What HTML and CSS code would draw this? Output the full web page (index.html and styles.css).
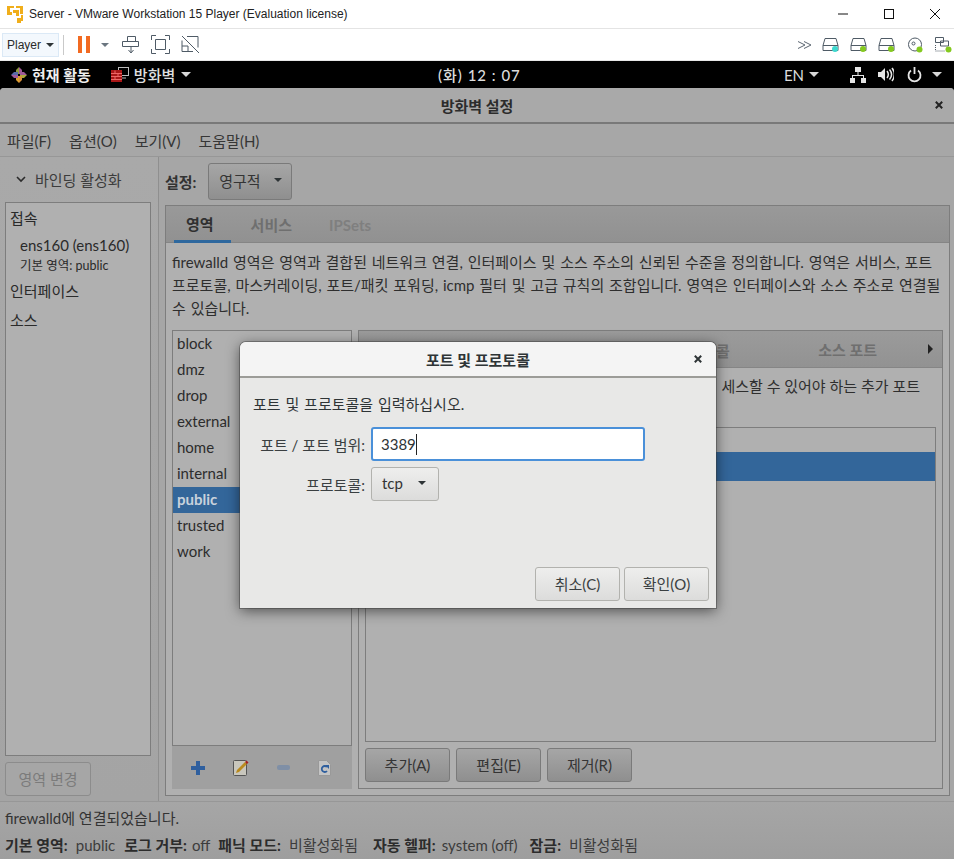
FILE: index.html
```html
<!doctype html>
<html lang="ko">
<head>
	<meta charset="utf-8">
	<title>Server - VMware Workstation 15 Player</title>
	<link rel="stylesheet" href="styles.css">
</head>
<body>
	<header class="titlebar">
		<svg class="vm-logo" width="17" height="17" viewBox="0 0 17 17" fill="#f0ae1b"><path d="M0 0h7v2H3v4h2v3H0zM9 0h7v2h-7zM13 2h3v6h-3zM6 4h6v6H9V7H6zM14 9h2v6h-2zM10 12h4v5h-4z"/></svg>
		<span class="title-text">Server - VMware Workstation 15 Player (Evaluation license)</span>
		<div class="win-btns">
			<svg width="12" height="12" viewBox="0 0 12 12"><path d="M1 6h10" stroke="#111" stroke-width="1"/></svg>
			<svg width="12" height="12" viewBox="0 0 12 12"><rect x="1.500" y="1.500" width="9" height="9" fill="none" stroke="#111"/></svg>
			<svg width="12" height="12" viewBox="0 0 12 12"><path d="M1 1l10 10M11 1L1 11" stroke="#111"/></svg>
		</div>
	</header>

	<div class="toolbar">
		<div class="player-btn">Player<i class="arrow dark"></i></div>
		<div class="tool-sep"></div>
		<div class="pause"><i></i><i></i></div>
		<i class="arrow gray"></i>
		<svg class="tool-icon" width="18" height="20" viewBox="0 0 18 20" fill="none" stroke="#4f5b66"><path d="M5.500 1.500h8v5h-8zM.5 6.500h16v5H.5zM9 12v5M6.500 15L9 18l2.500-3"/></svg>
		<svg class="tool-icon" width="19" height="19" viewBox="0 0 19 19" fill="none" stroke="#4f5b66"><path d="M.5 5V.5H5M14 .5h4.500V5M18.500 14v4.500H14M5 18.500H.5V14"/><path d="M4.500 4.500h10v10h-10z"/></svg>
		<svg class="tool-icon" width="19" height="19" viewBox="0 0 19 19" fill="none" stroke="#4f5b66"><path d="M6 1.500h11v11M12 16.500H1v-11M1 1l17 17M1 11h6v5"/></svg>
		<div class="tool-right">
			<svg class="chevrons" width="14" height="8" viewBox="0 0 14 8" fill="none" stroke="#5b6670"><path d="M0 .5l7 3.500-7 3.500M6 .5l7 3.500-7 3.500"/></svg>
			<svg width="17" height="16" viewBox="0 0 17 16" fill="none" stroke="#4f5b66"><path d="M3 1.500h11l2 7v5H1v-5zM1 8.500h15"/><circle cx="13" cy="12" r="3" fill="#3ed9cf" stroke="none"/></svg>
			<svg width="17" height="16" viewBox="0 0 17 16" fill="none" stroke="#4f5b66"><path d="M3 1.500h11l2 7v5H1v-5zM1 8.500h15"/><circle cx="13" cy="12" r="3" fill="#84c91f" stroke="none"/></svg>
			<svg width="17" height="16" viewBox="0 0 17 16" fill="none" stroke="#4f5b66"><path d="M3 1.500h11l2 7v5H1v-5zM1 8.500h15"/><circle cx="13" cy="12" r="3" fill="#84c91f" stroke="none"/></svg>
			<svg class="disc" width="17" height="16" viewBox="0 0 17 16" fill="none" stroke="#4f5b66"><circle cx="8" cy="7.500" r="6.500"/><circle cx="6.500" cy="6.500" r="1.500"/><circle cx="12.500" cy="12.500" r="3" fill="#84c91f" stroke="none"/></svg>
			<svg width="17" height="16" viewBox="0 0 17 16" fill="none" stroke="#4f5b66"><path d="M.5.500h8v5h-8zM5.500 4h8v5h-8z"/><path d="M.5 8v6h10" stroke-dasharray="1 1"/><circle cx="13.500" cy="12.500" r="3" fill="#84c91f" stroke="none"/></svg>
		</div>
	</div>

	<div class="topbar">
		<div class="top-left">
			<svg width="16" height="16" viewBox="0 0 16 16"><path d="M8 0l3 3v4H8z" fill="#a05a9a"/><path d="M8 0L5 3v4h3z" fill="#8f9a3c"/><path d="M16 8l-3 3H9V8z" fill="#a9a93c"/><path d="M16 8l-3-3H9v3z" fill="#a05a9a"/><path d="M8 16l-3-3V9h3z" fill="#e0a030"/><path d="M8 16l3-3V9H8z" fill="#d6903a"/><path d="M0 8l3-3h4v3z" fill="#5a6aa8"/><path d="M0 8l3 3h4V8z" fill="#a05a9a"/></svg>
			<span class="top-item strong">현재 활동</span>
			<svg class="fw-icon" width="18" height="15" viewBox="0 0 18 15"><rect x="7.500" y=".5" width="10" height="8" fill="none" stroke="#bbb"/><path d="M10 11h5" stroke="#bbb"/><rect y="3" width="11" height="12" fill="#a81616"/><path d="M0 6.500h11M0 9.500h11M0 12.500h11M4 3.500v3M7 6.500v3M4 9.500v3" stroke="#e66"/></svg>
			<span class="top-item">방화벽</span><i class="arrow light"></i>
		</div>
		<div class="clock">(화) 12 : 07</div>
		<div class="top-right">
			<span class="lang">EN</span><i class="arrow light"></i>
			<svg class="net" width="16" height="16" viewBox="0 0 16 16" fill="#e6e6e6"><path d="M5 0h6v5H8.500v3H14v3h2v5h-5v-5h2V9H3v2h2v5H0v-5h2V8h5.500V5H5z"/></svg>
			<svg class="vol" width="16" height="15" viewBox="0 0 16 15" fill="none" stroke="#e6e6e6" stroke-width="1.500"><path d="M0 5h3l4-4v13l-4-4H0z" fill="#e6e6e6" stroke="none"/><path d="M9 4c1.500 2 1.500 5 0 7M11.500 2.500c2.500 3 2.500 7 0 10M14 1c3 4 3 9 0 13"/></svg>
			<svg class="pow" width="15" height="16" viewBox="0 0 15 16" fill="none" stroke="#e6e6e6" stroke-width="1.800"><path d="M4 3.500a6 6 0 1 0 7 0M7.500 0v7"/></svg>
			<i class="arrow light"></i>
		</div>
	</div>

	<main class="app">
		<div class="app-title">방화벽 설정
			<svg class="close" width="8" height="8" viewBox="0 0 8 8"><path d="M.8.8l6.400 6.400M7.200.8L.8 7.200" stroke="#222" stroke-width="2"/></svg>
		</div>
		<nav class="menubar">
			<span>파일(F)</span><span>옵션(O)</span><span>보기(V)</span><span>도움말(H)</span>
		</nav>
		<div class="content">
			<aside class="sidebar">
				<div class="binding"><svg width="10" height="7" viewBox="0 0 10 7" fill="none" stroke="#2b2b2b" stroke-width="1.600"><path d="M1 1l4 4 4-4"/></svg>바인딩 활성화</div>
				<div class="side-box">
					<div class="side-head">접속</div>
					<div class="side-dev">ens160 (ens160)</div>
					<div class="side-zone">기본 영역: public</div>
					<div class="side-head gap1">인터페이스</div>
					<div class="side-head gap2">소스</div>
				</div>
				<div class="btn disabled zone-btn">영역 변경</div>
			</aside>
			<section class="panel">
				<div class="config-row">
					<b>설정:</b>
					<div class="btn config-btn">영구적<i class="arrow dark"></i></div>
				</div>
				<div class="notebook">
					<div class="tabs">
						<span class="tab active">영역</span><span class="tab">서비스</span><span class="tab faint">IPSets</span>
					</div>
					<div class="tab-body">
						<p class="desc">firewalld 영역은 영역과 결합된 네트워크 연결, 인터페이스 및 소스 주소의 신뢰된 수준을 정의합니다. 영역은 서비스, 포트 프로토콜, 마스커레이딩, 포트/패킷 포워딩, icmp 필터 및 고급 규칙의 조합입니다. 영역은 인터페이스와 소스 주소로 연결될 수 있습니다.</p>
						<div class="zones">
							<div class="zone-col">
								<ul class="zone-list">
									<li>block</li><li>dmz</li><li>drop</li><li>external</li><li>home</li><li>internal</li><li class="sel">public</li><li>trusted</li><li>work</li>
								</ul>
								<div class="zone-tools">
									<svg width="14" height="14" viewBox="0 0 14 14"><path d="M5 0h4v5h5v4H9v5H5V9H0V5h5z" fill="#2f5f9e"/></svg>
									<svg width="16" height="17" viewBox="0 0 16 17"><rect x=".5" y="1.500" width="13" height="15" rx="1" fill="#c9c7bd" stroke="#555"/><path d="M3 14l1-3 8-8 2 2-8 8z" fill="#b98a1e"/><path d="M12 3l1.500-1.500 2 2L14 5z" fill="#a52020"/></svg>
									<svg width="13" height="5" viewBox="0 0 13 5"><rect width="13" height="5" rx="2" fill="#7f8fa6"/></svg>
									<svg width="13" height="16" viewBox="0 0 13 16"><path d="M.5.500h8l4 4v11H.5z" fill="#c4c4c4" stroke="#999"/><path d="M9 7a3 3 0 1 0 0 4" fill="none" stroke="#2f5f9e" stroke-width="1.800"/><path d="M7 5l4 0 0 4z" fill="#2f5f9e"/></svg>
								</div>
							</div>
							<div class="detail">
								<div class="detail-tabs">
									<span class="src-port">소스 포트</span>
									<i class="tri-right"></i>
								</div>
								<div class="detail-body">
									<div class="port-list"><div class="port-sel"></div></div>
									<div class="port-btns">
										<div class="btn">추가(A)</div><div class="btn">편집(E)</div><div class="btn">제거(R)</div>
									</div>
								</div>
								<span class="peek peek-tab">콜</span>
								<span class="peek peek-desc">세스할 수 있어야 하는 추가 포트</span>
							</div>
						</div>
					</div>
				</div>
			</section>
		</div>
		<footer class="status">
			<div class="status-msg">firewalld에 연결되었습니다.</div>
			<div class="status-line">
				<b>기본 영역:</b><span class="v1">public</span><b>로그 거부:</b><span class="v2">off</span><b>패닉 모드:</b><span class="v3">비활성화됨</span><b>자동 헬퍼:</b><span class="v4">system (off)</span><b>잠금:</b><span class="v5">비활성화됨</span>
			</div>
		</footer>
	</main>

	<div class="dialog">
		<div class="dlg-head">포트 및 프로토콜
			<svg class="close" width="8" height="8" viewBox="0 0 8 8"><path d="M.8.8l6.400 6.400M7.200.8L.8 7.200" stroke="#2e3436" stroke-width="2"/></svg>
		</div>
		<div class="dlg-body">
			<p class="dlg-text">포트 및 프로토콜을 입력하십시오.</p>
			<div class="dlg-grid">
				<label>포트 / 포트 범위:</label>
				<div class="entry"><span>3389</span><i class="caret"></i></div>
				<label>프로토콜:</label>
				<div class="btn proto">tcp<i class="arrow dark"></i></div>
			</div>
			<div class="dlg-actions">
				<div class="btn light">취소(C)</div><div class="btn light">확인(O)</div>
			</div>
		</div>
	</div>
</body>
</html>
```

FILE: styles.css
```css
*{
	margin:0;
	padding:0;
	box-sizing:border-box;
}
html,body{
	width:954px;
	height:859px;
	overflow:hidden;
}
body{
	position:relative;
	display:flex;
	flex-direction:column;
	background:#fff;
	font-family:Lato,"Noto Sans CJK KR",sans-serif;
	font-size:15px;
	color:#2a2a2a;
}
ul{
	list-style:none;
}

/* 공통 화살표 */
.arrow{
	display:inline-block;
	width:0;
	height:0;
	border-style:solid;
	border-width:4.500px 4.500px 0;
	border-color:#2e3436 transparent transparent;
}
.arrow.gray{
	border-width:4px 4px 0;
	border-color:#6b7680 transparent transparent;
}
.arrow.light{
	border-width:5px 5px 0;
	border-color:#d8d8d8 transparent transparent;
}

/* VMware 창 */
.titlebar{
	height:29px;
	flex:none;
	display:flex;
	align-items:center;
	padding-left:7px;
	border-bottom:1px solid #e4e4e4;
	font-family:"Liberation Sans","Noto Sans CJK KR",sans-serif;
}
.title-text{
	margin-left:5px;
	font-size:12px;
	color:#222;
}
.win-btns{
	margin-left:auto;
	display:flex;
	gap:34px;
	padding-right:13px;
}
.toolbar{
	height:32px;
	flex:none;
	display:flex;
	align-items:center;
	padding-left:2px;
	border-bottom:1px solid #e8e8e8;
}
.player-btn{
	width:57px;
	height:24px;
	display:flex;
	align-items:center;
	justify-content:center;
	gap:5px;
	background:#f3f8fd;
	border:1px solid #dbe9f6;
	font-family:"Liberation Sans",sans-serif;
	font-size:12px;
}
.player-btn .arrow{
	border-width:4px 4px 0;
}
.tool-sep{
	width:1px;
	height:20px;
	margin:0 14px 0 4px;
	background:#c9c9c9;
}
.pause{
	display:flex;
	gap:4px;
	margin-right:11px;
}
.pause i{
	width:4px;
	height:17px;
	background:#f26a21;
}
.toolbar .arrow.gray{
	margin-right:13px;
}
.tool-icon{
	margin-right:11px;
}
.tool-right{
	margin-left:auto;
	display:flex;
	align-items:center;
	gap:11px;
	padding-right:2px;
}
.chevrons{
	margin-right:-1px;
}
.disc{
	margin-left:1px;
}

/* GNOME 상단 바 */
.topbar{
	height:27px;
	flex:none;
	display:flex;
	align-items:center;
	position:relative;
	background:#000;
	color:#dcdcdc;
}
.top-left{
	display:flex;
	align-items:center;
	padding-left:11px;
}
.top-item{
	margin-left:5px;
	font-size:15px;
	font-weight:500;
	color:#e0e0e0;
}
.top-item.strong{
	font-weight:700;
	color:#eee;
}
.fw-icon{
	margin-left:20px;
}
.top-left .arrow{
	margin-left:6px;
}
.clock{
	position:absolute;
	left:438px;
	font-size:15px;
	font-weight:500;
	letter-spacing:1px;
}
.top-right{
	margin-left:auto;
	display:flex;
	align-items:center;
	padding-right:12px;
}
.lang{
	font-size:15px;
	margin-right:5px;
}
.net{
	margin-left:31px;
}
.vol{
	margin-left:12px;
}
.pow{
	margin-left:13px;
}
.pow + .arrow{
	margin-left:10px;
}

/* 방화벽 앱 */
.app{
	flex:1;
	display:flex;
	flex-direction:column;
	background:#a6a6a6;
	border-radius:4px 4px 0 0;
	box-shadow:0 -4px 0 #000;
	min-height:0;
}
.app-title{
	height:36px;
	flex:none;
	position:relative;
	display:flex;
	align-items:center;
	justify-content:center;
	background:#a9a9a9;
	border-bottom:2px solid #797979;
	border-radius:4px 4px 0 0;
	font-weight:700;
	color:#2c2c2c;
}
.close{
	position:absolute;
	right:11px;
	top:50%;
	transform:translateY(-50%);
}
.menubar{
	height:33px;
	flex:none;
	display:flex;
	align-items:center;
	gap:18px;
	padding-left:7px;
	background:#a7a7a7;
	border-bottom:1px solid #979797;
	color:#363636;
}
.content{
	flex:1;
	display:flex;
	min-height:0;
	border-bottom:1px solid #979797;
}
.sidebar{
	width:159px;
	flex:none;
	display:flex;
	flex-direction:column;
	padding:0 7px 5px 5px;
	background:linear-gradient(#a9a9a9,#a4a4a4);
	border-right:1px solid #8f8f8f;
}
.binding{
	height:45px;
	flex:none;
	display:flex;
	align-items:center;
	gap:9px;
	padding-left:11px;
	color:#3c3c3c;
}
.side-box{
	flex:1;
	background:#b0b0b0;
	border:1px solid #7d7d7d;
	padding:5px 4px;
	color:#2a2a2a;
}
.side-head{
	line-height:21px;
}
.gap1{
	margin-top:6px;
}
.gap2{
	margin-top:8px;
}
.side-dev{
	margin:6px 0 0 10px;
	line-height:20px;
}
.side-zone{
	margin:2px 0 0 10px;
	font-size:12.500px;
	line-height:18px;
}
.btn{
	display:flex;
	align-items:center;
	justify-content:center;
	height:34px;
	padding-bottom:2px;
	background:linear-gradient(#a6a6a6,#8f8f8f);
	border:1px solid #7a7a7a;
	border-radius:3px;
	color:#343434;
}
.btn.disabled{
	background:#a6a6a6;
	border-color:#8c8c8c;
	color:#7b7b7b;
}
.zone-btn{
	flex:none;
	width:86px;
	margin-top:6px;
}
.panel{
	flex:1;
	display:flex;
	flex-direction:column;
	padding:0 4px 5px 6px;
	min-width:0;
}
.config-row{
	height:48px;
	flex:none;
	display:flex;
	align-items:center;
	gap:12px;
}
.config-row b{
	color:#333;
}
.config-btn{
	width:84px;
	height:37px;
	gap:13px;
}
.notebook{
	flex:1;
	display:flex;
	flex-direction:column;
	border:1px solid #7d7d7d;
	background:#b0b0b0;
	min-height:0;
}
.tabs{
	height:37px;
	flex:none;
	display:flex;
	padding-left:8px;
	background:linear-gradient(#999,#919191);
	border-bottom:1px solid #858585;
}
.tab{
	height:37px;
	padding:0 17px 0 12px;
	display:flex;
	align-items:center;
	margin-right:8px;
	font-weight:700;
	color:#6f6f6f;
}
.tab.active{
	color:#303030;
	border-bottom:3px solid #2e689e;
}
.tab.faint{
	color:#7f7f7f;
}
.tab-body{
	flex:1;
	display:flex;
	flex-direction:column;
	padding:8px 6px 6px;
	min-height:0;
}
.desc{
	height:79px;
	line-height:23px;
	word-break:keep-all;
	word-spacing:1px;
	color:#2e2e2e;
	flex:none;
}
.zones{
	flex:1;
	display:flex;
	gap:6px;
	min-height:0;
}
.zone-col{
	width:180px;
	flex:none;
	display:flex;
	flex-direction:column;
}
.zone-list{
	flex:1;
	background:#b0b0b0;
	border:1px solid #7d7d7d;
}
.zone-list li{
	height:26px;
	line-height:24px;
	padding-left:4px;
	color:#2c2c2c;
}
.zone-list li.sel{
	background:#33669a;
	color:#c8d2dc;
	font-weight:700;
}
.zone-tools{
	height:43px;
	flex:none;
	display:flex;
	align-items:center;
	justify-content:space-between;
	padding:0 21px 0 19px;
	background:#a0a0a0;
}
.detail{
	flex:1;
	position:relative;
	display:flex;
	flex-direction:column;
	border:1px solid #7d7d7d;
	min-width:0;
}
.detail-tabs{
	height:37px;
	flex:none;
	display:flex;
	align-items:center;
	justify-content:flex-end;
	padding-right:9px;
	background:linear-gradient(#9b9b9b,#929292);
	border-bottom:1px solid #858585;
}
.src-port{
	font-weight:700;
	color:#6f6f6f;
	margin-right:51px;
}
.tri-right{
	width:0;
	height:0;
	border-style:solid;
	border-width:5px 0 5px 5px;
	border-color:transparent transparent transparent #222;
}
.detail-body{
	flex:1;
	display:flex;
	flex-direction:column;
	padding:59px 6px 6px;
	min-height:0;
}
.port-list{
	flex:1;
	border:1px solid #7d7d7d;
	padding-top:24px;
}
.port-sel{
	height:29px;
	background:#33669a;
}
.port-btns{
	flex:none;
	display:flex;
	gap:6px;
	margin-top:6px;
}
.port-btns .btn{
	width:85px;
}
.peek{
	position:absolute;
}
.peek-tab{
	left:357px;
	top:9px;
	font-weight:700;
	color:#6f6f6f;
}
.peek-desc{
	right:22px;
	top:44px;
	color:#2e2e2e;
}
.status{
	height:57px;
	flex:none;
	padding:4px 5px 0;
	background:linear-gradient(#a6a6a6,#9e9e9e);
	color:#333;
}
.status-msg{
	line-height:24px;
}
.status-line{
	display:flex;
	align-items:center;
	line-height:23px;
	margin-top:4px;
}
.status-line b{
	font-weight:700;
	color:#2c2c2c;
}
.status-line span{
	color:#3c3c3c;
}
.v1{
	margin:0 9px 0 8px;
}
.v2{
	margin:0 8px 0 5px;
}
.v3{
	margin:0 15px 0 8px;
}
.v4{
	margin:0 12px 0 6px;
}
.v5{
	margin-left:8px;
}

/* 대화상자 */
.dialog{
	position:absolute;
	left:240px;
	top:342px;
	width:476px;
	height:266px;
	display:flex;
	flex-direction:column;
	background:#e8e8e7;
	border-radius:6px 6px 0 0;
	box-shadow:0 0 0 1px rgba(60,60,60,.45),0 3px 14px rgba(0,0,0,.55);
}
.dlg-head{
	height:36px;
	flex:none;
	position:relative;
	display:flex;
	align-items:center;
	justify-content:center;
	background:#f4f4f4;
	border-bottom:2px solid #9c9c98;
	border-radius:6px 6px 0 0;
	font-weight:700;
	color:#2e3436;
}
.dlg-head .close{
	right:14px;
}
.dlg-body{
	flex:1;
	display:flex;
	flex-direction:column;
	padding:15px 7px 7px 13px;
	min-height:0;
}
.dlg-text{
	line-height:22px;
	word-spacing:1px;
	color:#2e3436;
}
.dlg-grid{
	display:grid;
	grid-template-columns:112px 274px;
	grid-auto-rows:34px;
	gap:6px;
	margin-top:12px;
	align-items:center;
}
.dlg-grid label{
	text-align:right;
	color:#3a3f41;
}
.entry{
	height:34px;
	display:flex;
	align-items:center;
	padding-left:8px;
	background:#fff;
	border:2px solid #4a90d9;
	border-radius:3px;
	color:#2e3436;
}
.caret{
	width:1px;
	height:21px;
	background:#222;
}
.proto{
	width:68px;
	justify-content:flex-start;
	gap:15px;
	padding-left:10px;
	background:linear-gradient(#eeeeed,#dcdcdb);
	border-color:#b2b2ae;
}
.dlg-actions{
	margin-top:auto;
	display:flex;
	justify-content:flex-end;
	gap:4px;
}
.btn.light{
	width:85px;
	background:linear-gradient(#eeeeed,#dcdcdb);
	border-color:#b2b2ae;
	color:#3a3f41;
}
```
